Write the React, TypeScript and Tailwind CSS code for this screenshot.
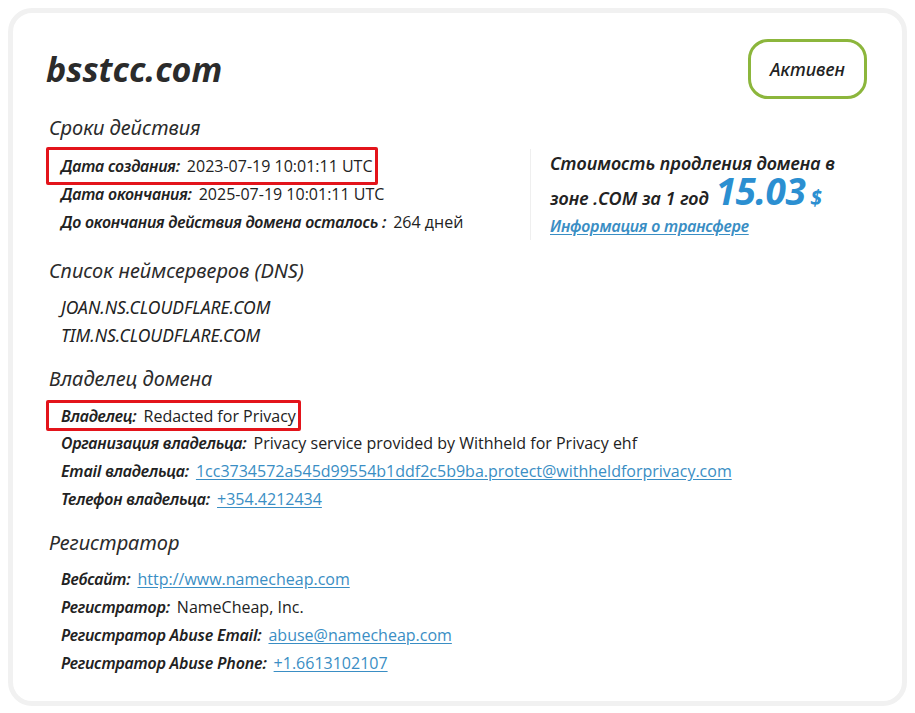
import type { ReactNode } from "react";

const labelFont = "font-['Noto_Sans',sans-serif] italic font-semibold";
const valueFont = "font-['Open_Sans',sans-serif]";

function Row({ label, children, box }: { label: string; children: ReactNode; box?: string }) {
  return (
    <div
      className={`flex h-[28px] items-center gap-[7px] text-[16px] text-[#222] ${
        box ? `-ml-[15px] w-fit rounded-[2px] border-[3px] border-[#e3141b] pl-[12px] pr-[2px] ${box}` : ""
      }`}
    >
      <span className={`${labelFont} tracking-[-0.2px]`}>{label}</span>
      <span className={valueFont}>{children}</span>
    </div>
  );
}

function A({ children }: { children: ReactNode }) {
  return <a className="text-[#3a8ec4] underline underline-offset-2">{children}</a>;
}

function Heading({ children }: { children: ReactNode }) {
  return (
    <div className="font-['Noto_Sans',sans-serif] text-[20px] italic leading-[28px] text-[#2b2b2b]">
      {children}
    </div>
  );
}

export default function App() {
  return (
    <div className="min-h-screen bg-white p-[8px]">
      <div className="rounded-[24px] border-[5px] border-[#f1f1f1] bg-white pb-[24px] pl-[33px] pr-[36px] pt-[26px]">
        <div className="flex items-start justify-between">
          <h1 className="mt-[10px] font-['Noto_Sans',sans-serif] text-[34px] font-bold italic leading-[40px] text-[#2b2b2b]">
            bsstcc.com
          </h1>
          <div className="mr-[-1px] flex h-[60px] w-[119px] items-center justify-center rounded-[20px] border-[3px] border-[#8cb63c] font-['Noto_Sans',sans-serif] text-[18px] font-medium italic text-[#222]">
            Активен
          </div>
        </div>

        <div className="mt-[15px] pl-[3px]">
          <Heading>Сроки действия</Heading>
          <div className="flex">
            <div className="w-[481px] pl-[12px] pt-[10px]">
              <Row label="Дата создания:" box="-my-[5px] h-[38px]">
                2023-07-19 10:01:11 UTC
              </Row>
              <Row label="Дата окончания:">2025-07-19 10:01:11 UTC</Row>
              <Row label="До окончания действия домена осталось :">264 дней</Row>
            </div>
            <div className="mt-[7px] h-[91px] border-l border-[#efefef] pl-[19px]">
              <div className={`${labelFont} pt-[1px] text-[18px] leading-[26px] text-[#222]`}>
                Стоимость продления домена в
              </div>
              <div className={`${labelFont} flex h-[34px] items-baseline text-[18px] leading-[34px] text-[#222]`}>
                зоне .COM за 1 год
                <span className="ml-[7px] font-['Noto_Sans',sans-serif] text-[37px] font-bold italic leading-[30px] tracking-[-0.5px] text-[#2b8fd1]">
                  15.03
                </span>
                <span className="ml-[5px] font-['Noto_Sans',sans-serif] text-[21px] font-bold italic text-[#2b8fd1]">
                  $
                </span>
              </div>
              <a className={`${labelFont} mt-[3px] block text-[16px] leading-[26px] tracking-[-0.2px] text-[#3a8ec4] underline underline-offset-2`}>
                Информация о трансфере
              </a>
            </div>
          </div>

          <div className="mt-[17px]">
            <Heading>Список неймсерверов (DNS)</Heading>
          </div>
          <div className="pl-[12px] pt-[8px] font-['Noto_Sans',sans-serif] text-[17.5px] italic text-[#222]">
            <div className="flex h-[28px] items-center">JOAN.NS.CLOUDFLARE.COM</div>
            <div className="flex h-[28px] items-center">TIM.NS.CLOUDFLARE.COM</div>
          </div>

          <div className="mt-[16px]">
            <Heading>Владелец домена</Heading>
          </div>
          <div className="pl-[12px] pt-[8px]">
            <Row label="Владелец:" box="-mt-[1px] -mb-[2px] h-[31px]">
              Redacted for Privacy
            </Row>
            <Row label="Организация владельца:">Privacy service provided by Withheld for Privacy ehf</Row>
            <Row label="Email владельца:">
              <A>1cc3734572a545d99554b1ddf2c5b9ba.protect@withheldforprivacy.com</A>
            </Row>
            <Row label="Телефон владельца:">
              <A>+354.4212434</A>
            </Row>
          </div>

          <div className="mt-[16px]">
            <Heading>Регистратор</Heading>
          </div>
          <div className="pl-[12px] pt-[8px]">
            <Row label="Вебсайт:">
              <A>http://www.namecheap.com</A>
            </Row>
            <Row label="Регистратор:">NameCheap, Inc.</Row>
            <Row label="Регистратор Abuse Email:">
              <A>abuse@namecheap.com</A>
            </Row>
            <Row label="Регистратор Abuse Phone:">
              <A>+1.6613102107</A>
            </Row>
          </div>
        </div>
      </div>
    </div>
  );
}
